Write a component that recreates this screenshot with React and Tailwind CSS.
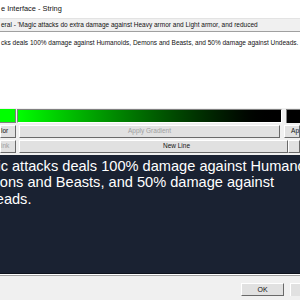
import React from 'react';

const Btn = ({ children, className = '', disabled = false }) => (
    <div
        className={`h-full flex items-center justify-center bg-[#e1e1e1] border border-t-white border-l-white border-r-[#696969] border-b-[#696969] text-[6.5px] leading-none whitespace-nowrap ${disabled ? 'text-[#a0a0a0]' : 'text-[#111]'} ${className}`}
    >
        {children}
    </div>
);

export default function App() {
    return (
        <div className="w-[300px] h-[300px] overflow-hidden bg-[#f0f0f0] flex flex-col font-['Liberation_Sans',Arial,sans-serif]">
            {/* Title bar */}
            <div className="h-[18px] shrink-0 bg-white flex items-center pl-[1px] text-[7.4px] text-[#111]">
                e Interface - String
            </div>

            {/* Name row */}
            <div className="h-[14px] shrink-0 bg-[#f0f0f0] border-t border-[#e3e3e3] border-b border-b-[#a0a0a0] flex items-center pl-[1px] text-[6.5px] text-[#111] whitespace-nowrap overflow-hidden">
                eral - 'Magic attacks do extra damage against Heavy armor and Light armor, and reduced
            </div>

            {/* Raw text */}
            <div className="h-[76px] shrink-0 bg-white pl-[1px] pt-[6px] text-[6.5px] text-[#111] whitespace-nowrap overflow-hidden">
                cks deals 100% damage against Humanoids, Demons and Beasts, and 50% damage against Undeads.
            </div>

            {/* Colour row */}
            <div className="h-[14px] shrink-0 mt-[1px] flex">
                <div className="w-[16px] h-full bg-[#00ff00] border-r border-b border-[#808080]" />
                <div className="ml-[1px] w-[265px] h-full border border-t-[#808080] border-l-[#808080] border-r-white border-b-white bg-gradient-to-r from-[#00ff00] to-black" />
                <div className="ml-[4px] flex-1 h-full bg-black border-t border-l border-[#808080]" />
            </div>

            {/* Button rows */}
            <div className="h-[13px] shrink-0 mt-[2px] flex">
                <Btn className="w-[16px] justify-start! pl-0">lor</Btn>
                <Btn className="ml-[3px] w-[262px]" disabled>Apply Gradient</Btn>
                <Btn className="ml-[4px] flex-1 justify-start! pl-[6px]">Ap</Btn>
            </div>
            <div className="h-[13px] shrink-0 mt-[2px] flex">
                <Btn className="w-[16px] justify-start! pl-0" disabled>ink</Btn>
                <Btn className="ml-[3px] w-[269px] pl-[46px]">New Line</Btn>
                <Btn className="flex-1" />
            </div>

            {/* Preview */}
            <div className="h-[119px] shrink-0 mt-[2px] bg-[#1a2232] overflow-hidden pt-[3px] border-b border-b-[#0d111b]">
                <p className="ml-[-31px] w-[365px] text-[14.6px] leading-[16.3px] text-white">
                    Magic attacks deals 100% damage against Humanoids, Demons and Beasts, and 50% damage against Undeads.
                </p>
            </div>
            <div className="h-[1px] shrink-0 bg-white" />
            <div className="h-[1px] shrink-0 bg-[#a0a0a0]" />

            {/* Footer */}
            <div className="flex-1 flex justify-end items-start pt-[7px]">
                <div className="w-[43px] h-[13px] flex items-center justify-center bg-[#e1e1e1] border border-t-white border-l-white border-r-[#696969] border-b-[#696969] text-[7px] text-[#111] leading-none">
                    OK
                </div>
                <div className="ml-[6px] w-[10px] h-[13px] bg-[#e1e1e1] border-t border-l border-white" />
            </div>
        </div>
    );
}
